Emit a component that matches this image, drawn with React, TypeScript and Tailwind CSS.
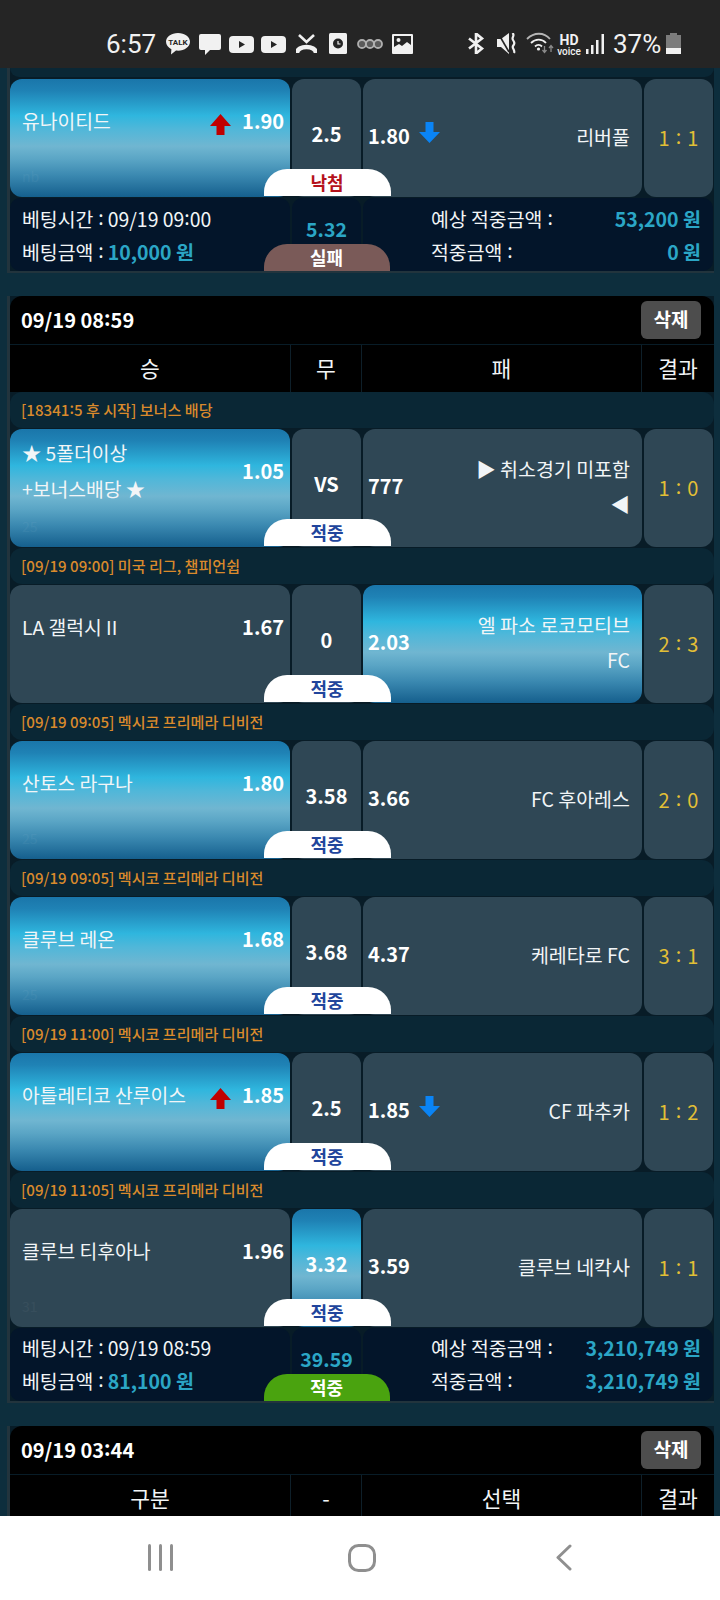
import React from 'react';

const GRAD = 'bg-[linear-gradient(180deg,#1a76aa_0%,#1f82b5_10%,#2fb6de_31%,#4fb7d9_42%,#70b6d1_57%,#5aa5c5_68%,#3a88b0_82%,#155f8d_100%)]';
const CARD = 'bg-[#2f4755]';

function UpArrow() {
  return <svg width="21" height="21" viewBox="0 0 21 21" className="shrink-0 translate-y-[3px]"><path d="M10.5 0 L21 12 H14.5 V21 H6.5 V12 H0 Z" fill="#c00000" /></svg>;
}
function DownArrow() {
  return <svg width="21" height="21" viewBox="0 0 21 21" className="shrink-0 -translate-y-[4px]"><path d="M6.500 0 H14.500 V10 H21 L10.500 21 L0 10 H6.500 Z" fill="#0a84f5" /></svg>;
}

// The reference's font draws ":" raised; render it that way
function T({ s }: { s: string }) {
  const parts = s.split(':');
  return (
    <>
      {parts.map((p, i) => (
        <React.Fragment key={i}>
          {i > 0 && <span className="relative -top-[2px]">:</span>}
          {p}
        </React.Fragment>
      ))}
    </>
  );
}

type Match = {
  league?: string; home: string; home2?: string; hOdd: string; draw: string; aOdd: string; away: string; away2?: string; result: [string, string];
  pick: 'h' | 'd' | 'a'; up?: boolean; badge: string; faint?: string;
};

function Badge({ lose }: { lose?: boolean }) {
  return (
    <div className="absolute left-[253.5px] bottom-[1px] w-[127px] h-[27px] rounded-t-[23px] bg-white flex items-center justify-center">
      <span className={`text-[18px] leading-[27px] font-bold ${lose ? 'text-[#b5121b]' : 'text-[#21459c]'}`}>{lose ? '낙첨' : '적중'}</span>
    </div>
  );
}

function MatchRow({ m }: { m: Match }) {
  return (
    <div className="relative h-[118px] flex mb-px">
      <div className={`relative w-[280px] rounded-[12px] flex items-start pl-3 pr-[6px] ${m.pick === 'h' ? GRAD : CARD}`}>
        <div className="h-[84px] flex items-center w-full">
          <div className="text-[19.3px] leading-[36px] text-[#f2f5f7] flex-1">
            <div>{m.home}</div>
            {m.home2 && <div>{m.home2}</div>}
          </div>
          {m.up && <div className="mr-[11px]"><UpArrow /></div>}
          <div className="text-[20px] font-bold text-white leading-[36px]">{m.hOdd}</div>
        </div>
        {m.faint && <span className="absolute left-3 bottom-[10px] text-[14px] text-white opacity-[0.04]">{m.faint}</span>}
      </div>
      <div className={`ml-[2px] w-[69px] rounded-[12px] flex justify-center ${m.pick === 'd' ? GRAD : CARD}`}>
        <div className="h-[110px] flex items-center text-[20px] font-bold text-white">{m.draw}</div>
      </div>
      <div className={`ml-[2px] w-[279px] rounded-[12px] flex pl-[5px] pr-[12px] ${m.pick === 'a' ? GRAD : CARD}`}>
        <div className="h-[114px] flex items-center w-full">
          <div className="text-[20px] font-bold text-white">{m.aOdd}</div>
          {m.up && <div className="ml-[9px]"><DownArrow /></div>}
          <div className="flex-1 text-right text-[19.5px] leading-[35px] text-[#f2f5f7]">
            <div>{m.away}</div>
            {m.away2 && <div>{m.away2}</div>}
          </div>
        </div>
      </div>
      <div className={`ml-[2px] w-[69px] rounded-[12px] flex justify-center ${CARD}`}>
        <div className="h-[118px] flex items-center text-[20px] text-[#e2bf36]">
          <span>{m.result[0]}</span>
          <span className="relative -top-[2px] mx-[6px]">:</span>
          <span>{m.result[1]}</span>
        </div>
      </div>
      <Badge lose={m.badge === '낙첨'} />
    </div>
  );
}

function League({ text }: { text: string }) {
  return (
    <div className="h-[36px] mb-px rounded-[12px] bg-[#0a2735] flex items-center pb-[2px] pl-[11px] text-[15.1px] font-medium text-[#d98a2c]"><T s={text} /></div>
  );
}

function Label({ s }: { s: string }) {
  return <>{s}<span className="relative -top-[2px] ml-[5px] mr-[4px]">:</span></>;
}

function Info({ time, stake, odd, expect, win, ok, first }: { time: string; stake: string; odd: string; expect: string; win: string; ok?: boolean; first?: boolean }) {
  const pad = first ? 'pt-[4px]' : 'pt-[3px]';
  const money = 'text-[19.5px] font-bold text-[#2ba6c6]';
  return (
    <div className="relative h-[73px] flex text-[19.4px] text-[#f2f5f7] leading-[33px]">
      <div className={`w-[280px] rounded-[10px] bg-[#03152a] pl-3 ${pad}`}>
        <div className="whitespace-nowrap"><Label s="베팅시간" /><T s={time} /></div>
        <div className="whitespace-nowrap"><Label s="베팅금액" /><span className={money}>{stake}</span></div>
      </div>
      <div className="ml-[2px] w-[69px] rounded-[10px] bg-[#03152a] flex justify-center pt-[14px]">
        <span className={money}>{odd}</span>
      </div>
      <div className={`ml-[2px] w-[350px] rounded-[10px] bg-[#03152a] pl-[68px] pr-[12px] ${pad}`}>
        <div className="flex justify-between"><span><Label s="예상 적중금액" /></span><span className={money}>{expect}</span></div>
        <div className="flex justify-between"><span><Label s="적중금액" /></span><span className={money}>{win}</span></div>
      </div>
      <div className={`absolute left-[253.5px] bottom-0 w-[126px] h-[27px] rounded-t-[23px] flex items-center justify-center text-[18px] font-bold text-white ${ok ? 'bg-[#4aa30f]' : 'bg-[#7a5a58]'}`}>{ok ? '적중' : '실패'}</div>
    </div>
  );
}

function Header({ date, cols }: { date: string; cols: string[] }) {
  return (
    <>
      <div className="h-[48px] rounded-t-[12px] bg-black flex items-center justify-between pl-[11px] pr-[13px] mb-px">
        <span className="text-[20px] font-bold text-white"><T s={date} /></span>
        <div className="w-[60px] h-[38px] mt-[-1px] rounded-[6px] bg-[#4d4d4d] flex items-center justify-center text-[19px] font-bold text-white">삭제</div>
      </div>
      <div className="h-[47px] flex bg-black text-[21.5px] text-[#f2f5f7]">
        <div className="w-[281px] border-r border-[#0e1f29] flex items-center justify-center">{cols[0]}</div>
        <div className="w-[71px] border-r border-[#0e1f29] flex items-center justify-center">{cols[1]}</div>
        <div className="w-[280px] border-r border-[#0e1f29] flex items-center justify-center">{cols[2]}</div>
        <div className="flex-1 flex items-center justify-center">{cols[3]}</div>
      </div>
    </>
  );
}

const FIRST: Match = { home: '유나이티드', hOdd: '1.90', draw: '2.5', aOdd: '1.80', away: '리버풀', result: ['1', '1'], pick: 'h', up: true, badge: '낙첨', faint: 'nb' };

const MATCHES: Match[] = [
  { league: '[18341:5 후 시작] 보너스 배당', home: '★ 5폴더이상', home2: '+보너스배당 ★', hOdd: '1.05', draw: 'VS', aOdd: '777', away: '▶ 취소경기 미포함', away2: '◀', result: ['1', '0'], pick: 'h', badge: '적중', faint: '25' },
  { league: '[09/19 09:00] 미국 리그, 챔피언쉽', home: 'LA 갤럭시 II', hOdd: '1.67', draw: '0', aOdd: '2.03', away: '엘 파소 로코모티브', away2: 'FC', result: ['2', '3'], pick: 'a', badge: '적중' },
  { league: '[09/19 09:05] 멕시코 프리메라 디비전', home: '산토스 라구나', hOdd: '1.80', draw: '3.58', aOdd: '3.66', away: 'FC 후아레스', result: ['2', '0'], pick: 'h', badge: '적중', faint: '25' },
  { league: '[09/19 09:05] 멕시코 프리메라 디비전', home: '클루브 레온', hOdd: '1.68', draw: '3.68', aOdd: '4.37', away: '케레타로 FC', result: ['3', '1'], pick: 'h', badge: '적중', faint: '25' },
  { league: '[09/19 11:00] 멕시코 프리메라 디비전', home: '아틀레티코 산루이스', hOdd: '1.85', draw: '2.5', aOdd: '1.85', away: 'CF 파추카', result: ['1', '2'], pick: 'h', up: true, badge: '적중' },
  { league: '[09/19 11:05] 멕시코 프리메라 디비전', home: '클루브 티후아나', hOdd: '1.96', draw: '3.32', aOdd: '3.59', away: '클루브 네칵사', result: ['1', '1'], pick: 'd', badge: '적중', faint: '31' },
];

function StatusBar() {
  const w = '#f1f1f1';
  return (
    <div className="h-[68px] shrink-0 bg-[#252525] flex items-start pt-[33px] pl-[106px] text-[#f1f1f1]" style={{ fontFamily: 'Roboto, sans-serif' }}>
      <span className="text-[26px] leading-[22px] w-[60px] shrink-0">6:57</span>
      {/* KakaoTalk */}
      <svg width="24" height="22" viewBox="0 0 24 22" className="shrink-0">
        <path d="M12 0C5.4 0 0 3.9 0 8.8c0 3.1 2.2 5.9 5.4 7.4L5 21.5l5-3.9c.7.1 1.3.1 2 .1 6.6 0 12-3.9 12-8.9S18.6 0 12 0z" fill={w} />
        <text x="12" y="12" textAnchor="middle" fontSize="8" fontWeight="700" fill="#252525" fontFamily="Roboto, sans-serif">TALK</text>
      </svg>
      <svg width="22" height="22" viewBox="0 0 22 22" className="ml-[9px] shrink-0"><path d="M2 1h18a2 2 0 0 1 2 2v12a2 2 0 0 1-2 2H11l-5 5v-5H2a2 2 0 0 1-2-2V3a2 2 0 0 1 2-2z" fill={w} /></svg>
      {[0, 1].map((i) => (
        <svg key={i} width="25" height="17" viewBox="0 0 25 17" className={`mt-[3px] shrink-0 ${i ? 'ml-[7px]' : 'ml-[8px]'}`}>
          <rect width="25" height="17" rx="4" fill={w} /><path d="M10 5l6 3.5-6 3.5z" fill="#252525" />
        </svg>
      ))}
      {/* missed call */}
      <svg width="21" height="21" viewBox="0 0 21 21" className="ml-[10px] shrink-0" fill="none">
        <path d="M3 2l7.5 7L18 2" stroke={w} strokeWidth="2.6" />
        <path d="M1 20c0-8 19-8 19 0" stroke={w} strokeWidth="4.5" />
      </svg>
      {/* clock box */}
      <svg width="18" height="21" viewBox="0 0 18 21" className="ml-[12px] shrink-0">
        <rect width="18" height="21" rx="1.5" fill={w} /><circle cx="9" cy="10.5" r="5" fill="#252525" /><path d="M9 8v3h2.5" stroke={w} strokeWidth="1.2" fill="none" />
      </svg>
      {/* ooo */}
      <svg width="26" height="10" viewBox="0 0 26 10" className="ml-[10px] mt-[6px] shrink-0" fill="#5a5a5a" stroke="#b0b0b0" strokeWidth="1.8">
        <circle cx="5" cy="5" r="4" /><circle cx="13" cy="5" r="4" /><circle cx="21" cy="5" r="4" />
      </svg>
      {/* image */}
      <svg width="21" height="20" viewBox="0 0 21 20" className="ml-[9px] mt-[1px] shrink-0">
        <rect width="21" height="20" rx="1" fill={w} /><rect x="2" y="2" width="17" height="11" fill="#252525" />
        <circle cx="6.5" cy="6" r="2" fill={w} /><path d="M2 13l5-3 3 2 5-4 4 3v2H2z" fill={w} />
      </svg>
      {/* bluetooth */}
      <svg width="18" height="21" viewBox="0 0 18 21" className="ml-[54px] shrink-0" fill="none" stroke={w} strokeWidth="2.6">
        <path d="M2 5.5l13 10-6 5V.5l6 5-13 10" />
      </svg>
      {/* vibrate-mute */}
      <svg width="21" height="21" viewBox="0 0 21 21" className="ml-[12px] shrink-0" fill="none">
        <path d="M0 6h4l8-6v21L4 14H0z" fill={w} />
        <path d="M15.500 0c3 3-1.500 4 .5 7s1.500 4 0 6 2.500 4 1 7" stroke={w} strokeWidth="2.200" />
        <path d="M1 0l11 19" stroke="#252525" strokeWidth="1.600" />
      </svg>
      {/* wifi */}
      <svg width="28" height="22" viewBox="0 0 28 22" className="ml-[8px] -mt-[1px] shrink-0" fill="none">
        <path d="M1 7c7-7 17-7 23 0" stroke="#b5b5b5" strokeWidth="1.8" />
        <path d="M5 11c4.500-4.500 11-4.500 15 0" stroke={w} strokeWidth="1.8" />
        <path d="M9 14.500c2-2 5-2 7 0" stroke={w} strokeWidth="1.8" />
        <circle cx="12.500" cy="17" r="1.600" fill={w} />
        <path d="M18.500 14v6m-2-2l2 2.500 2-2.500" stroke="#8a8a8a" strokeWidth="1.300" />
        <path d="M25 20v-6m-2 2l2-2.500 2 2.500" stroke="#8a8a8a" strokeWidth="1.300" />
      </svg>
      <div className="ml-[4px] mt-[1px] w-[22px] flex flex-col items-center shrink-0">
        <span className="text-[14px] font-bold leading-[12px]">HD</span>
        <span className="text-[10px] leading-[9px] mt-px font-medium">voice</span>
      </div>
      {/* signal */}
      <svg width="19" height="20" viewBox="0 0 19 20" className="ml-[6px] mt-[1px] shrink-0" fill={w}>
        <rect x="0" y="15" width="2.500" height="5" /><rect x="5" y="11" width="2.500" height="9" /><rect x="10" y="6" width="2.500" height="14" /><rect x="15.500" y="0" width="2.500" height="20" />
      </svg>
      <span className="ml-[8px] text-[26px] leading-[22px] w-[50px] shrink-0">37%</span>
      {/* battery */}
      <svg width="15" height="21" viewBox="0 0 15 21" className="ml-[3px] shrink-0">
        <path d="M4 0h7v2h4v19H0V2h4z" fill="#7c7c7c" /><rect y="15" width="15" height="6" fill={w} />
      </svg>
    </div>
  );
}

function NavBar() {
  return (
    <div className="h-[84px] bg-white flex items-start pt-[28px] pl-[148px] shrink-0">
      <svg width="26" height="27" viewBox="0 0 26 27" className="shrink-0" fill="#8f8f8f">
        <rect x="0" y="0" width="3" height="27" rx="1.500" /><rect x="11" y="0" width="3" height="27" rx="1.500" /><rect x="22" y="0" width="3" height="27" rx="1.500" />
      </svg>
      <svg width="28" height="28" viewBox="0 0 28 28" className="ml-[174px] shrink-0" fill="none" stroke="#8f8f8f" strokeWidth="3">
        <rect x="1.500" y="1.500" width="25" height="25" rx="9" />
      </svg>
      <svg width="16" height="27" viewBox="0 0 16 27" className="ml-[180px] shrink-0" fill="none" stroke="#8f8f8f" strokeWidth="3" strokeLinecap="round" strokeLinejoin="round">
        <path d="M14 2L2 13.500 14 25" />
      </svg>
    </div>
  );
}

const SECTION = 'ml-[7px] mr-[6px] border-l-[3px] border-[#22343d] bg-[#081c27]';

export default function App() {
  return (
    <div className="w-[720px] h-[1600px] overflow-hidden flex flex-col bg-[#0d2e3d]" style={{ fontFamily: '"Noto Sans CJK KR", "Noto Sans", sans-serif' }}>
      <StatusBar />
      <div className="flex-1 overflow-hidden">
        {/* first, cut-off card */}
        <div className={SECTION}>
          <div className="h-[9px] mb-[2px] rounded-b-[12px] bg-[#0a2735]" />
          <MatchRow m={FIRST} />
          <Info first time="09/19 09:00" stake="10,000 원" odd="5.32" expect="53,200 원" win="0 원" />
          <div className="h-[2px] bg-[#22343d]" />
        </div>
        {/* second card */}
        <div className={`mt-[23px] ${SECTION}`}>
          <Header date="09/19 08:59" cols={['승', '무', '패', '결과']} />
          {MATCHES.map((m, i) => (
            <div key={i}>
              <League text={m.league!} />
              <MatchRow m={m} />
            </div>
          ))}
          <Info time="09/19 08:59" stake="81,100 원" odd="39.59" expect="3,210,749 원" win="3,210,749 원" ok />
          <div className="h-[2px] bg-[#22343d]" />
        </div>
        {/* third card */}
        <div className={`mt-[23px] ${SECTION}`}>
          <Header date="09/19 03:44" cols={['구분', '-', '선택', '결과']} />
        </div>
      </div>
      <NavBar />
    </div>
  );
}
